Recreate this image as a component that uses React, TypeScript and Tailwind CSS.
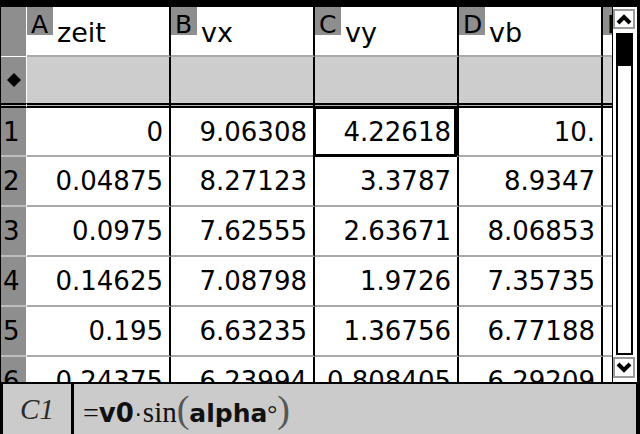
import React from "react";

const cols: [string, string][] = [
  ["A", "zeit"],
  ["B", "vx"],
  ["C", "vy"],
  ["D", "vb"],
];

const rows: string[][] = [
  ["0", "9.06308", "4.22618", "10."],
  ["0.04875", "8.27123", "3.3787", "8.9347"],
  ["0.0975", "7.62555", "2.63671", "8.06853"],
  ["0.14625", "7.08798", "1.9726", "7.35735"],
  ["0.195", "6.63235", "1.36756", "6.77188"],
  ["0.24375", "6.23994", "0.808405", "6.29209"],
];

function Chevron({ up }: { up?: boolean }) {
  return (
    <svg width="16" height="11" viewBox="0 0 16 11">
      <polyline
        points={up ? "2,9 8,3 14,9" : "2,2 8,8 14,2"}
        fill="none"
        stroke="black"
        strokeWidth="4"
        strokeLinejoin="miter"
      />
    </svg>
  );
}

export default function App() {
  return (
    <div className="flex h-[434px] w-[640px] flex-col overflow-hidden bg-black font-['DejaVu_Sans',sans-serif] text-black">
      {/* top bar */}
      <div className="h-[7px] shrink-0" />

      {/* sheet + scrollbar */}
      <div className="flex h-[375px] shrink-0 pl-px pr-[3px]">
        <div className="w-[611px] shrink-0 overflow-hidden bg-white">
          {/* column header row */}
          <div className="flex h-[50px]">
            <div className="w-[26px] shrink-0 border-r border-b border-white bg-[#8e8e8e]" />
            {cols.map(([letter, name]) => (
              <div
                key={letter}
                className="flex w-[144px] shrink-0 border-r-2 border-b-2 border-r-black border-b-[#a9a9a9] bg-white"
              >
                <div className="h-[28px] w-[26px] shrink-0 bg-[#8e8e8e] pt-[6px] pl-[4px] text-[25px] leading-[24px]">
                  {letter}
                </div>
                <div className="ml-[4px] pt-[11px] text-[27px] leading-[30px]">{name}</div>
              </div>
            ))}
            <div className="w-[9px] shrink-0 overflow-hidden border-b-2 border-b-[#a9a9a9]">
              <div className="h-[28px] w-[26px] bg-[#8e8e8e] pt-[6px] pl-[4px] text-[25px] leading-[24px]">E</div>
            </div>
          </div>

          {/* formula row */}
          <div className="flex h-[46px]">
            <div className="flex w-[26px] shrink-0 items-center justify-center border-r border-white bg-[#8e8e8e]">
              <svg width="14" height="14" viewBox="0 0 14 14">
                <polygon points="7,0 14,7 7,14 0,7" fill="black" />
              </svg>
            </div>
            {cols.map(([letter]) => (
              <div key={letter} className="w-[144px] shrink-0 border-r-2 border-black bg-[#cdcdcd]" />
            ))}
            <div className="w-[9px] shrink-0 bg-[#cdcdcd]" />
          </div>

          {/* double rule */}
          <div className="flex h-[5px]">
            <div className="w-[26px] shrink-0 border-y-2 border-r border-y-black border-r-white bg-[#b0b0b0]" />
            {cols.map(([letter]) => (
              <div key={letter} className="w-[144px] shrink-0 border-y-2 border-r-2 border-black bg-[#b0b0b0]" />
            ))}
            <div className="w-[9px] shrink-0 border-y-2 border-black bg-[#b0b0b0]" />
          </div>

          {/* data rows */}
          {rows.map((r, i) => (
            <div key={i} className={`flex ${i === 0 ? "h-[49px]" : "h-[50px]"}`}>
              <div className="flex w-[26px] shrink-0 items-center border-r border-b-2 border-r-white border-b-[#bdbdbd] bg-[#8e8e8e] pl-[2px] text-[26px] leading-none">
                {i + 1}
              </div>
              {r.map((v, j) => (
                <div
                  key={j}
                  className="relative flex w-[144px] shrink-0 items-center justify-end border-r-2 border-b-2 border-r-black border-b-[#a9a9a9] pr-[6px] text-[26px] leading-none"
                >
                  {v}
                  {i === 0 && j === 2 && (
                    <div className="absolute -top-[2px] -left-[2px] right-0 -bottom-[2px] border-[3px] border-black" />
                  )}
                </div>
              ))}
              <div className="w-[9px] shrink-0 border-b-2 border-[#a9a9a9]" />
            </div>
          ))}
        </div>

        <div className="w-px shrink-0 bg-black" />

        {/* scrollbar */}
        <div className="flex w-[24px] shrink-0 flex-col bg-white pt-[2px]">
          <div className="flex h-[20px] w-[22px] items-center justify-center border-2 border-[#9a9a9a] bg-white">
            <Chevron up />
          </div>
          <div className="mt-[4px] ml-[3px] flex w-[17px] flex-1 flex-col border-2 border-black bg-white">
            <div className="h-[31px] bg-black" />
          </div>
          <div className="mt-[2px] mb-[4px] flex h-[21px] w-[22px] items-center justify-center border-2 border-[#9a9a9a] bg-white">
            <Chevron />
          </div>
        </div>
      </div>

      {/* formula bar */}
      <div className="mt-[2px] mr-[4px] mb-[5px] ml-[3px] flex flex-1 bg-[#cbcbcb]">
        <div className="flex w-[68px] shrink-0 items-center justify-center font-['Liberation_Serif',serif] text-[29px] italic text-[#2a2a2a]">
          C1
        </div>
        <div className="w-[3px] shrink-0 bg-black" />
        <div className="flex items-baseline pt-[6px] pl-[9px] text-[#111]">
          <span className="font-['Liberation_Serif',serif] text-[28px]">=</span>
          <span className="font-['DejaVu_Sans',sans-serif] text-[26px] font-bold">v0</span>
          <span className="px-[1px] font-['DejaVu_Sans',sans-serif] text-[22px]">·</span>
          <span className="font-['Liberation_Serif',serif] text-[29px]">sin</span>
          <span className="font-['Liberation_Serif',serif] text-[38px] font-light leading-none text-[#555]">(</span>
          <span className="font-['DejaVu_Sans',sans-serif] text-[25px] font-bold">alpha</span>
          <span className="font-['Liberation_Serif',serif] text-[25px]">°</span>
          <span className="font-['Liberation_Serif',serif] text-[38px] font-light leading-none text-[#555]">)</span>
        </div>
      </div>
    </div>
  );
}
